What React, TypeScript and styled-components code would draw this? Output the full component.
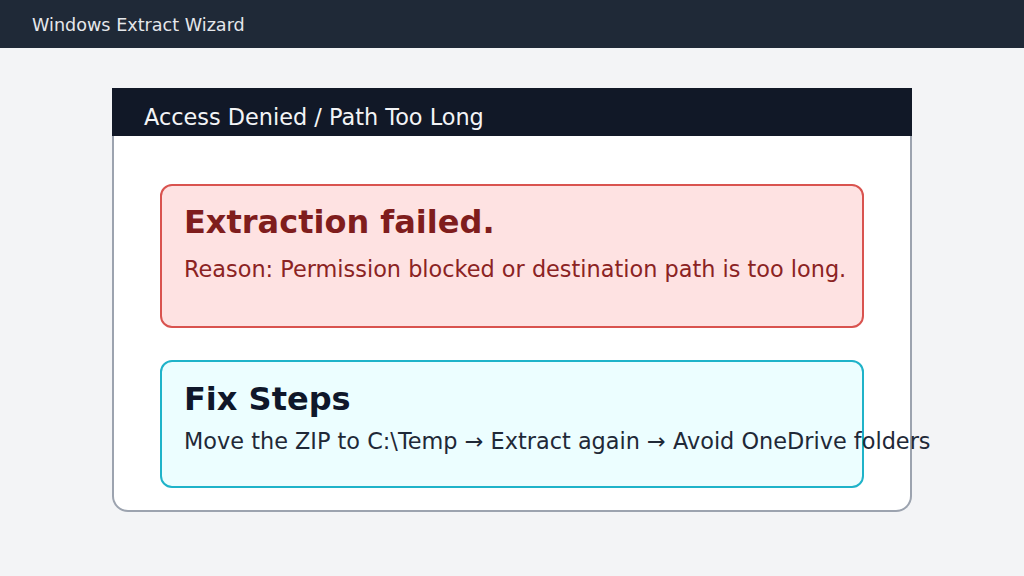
import React from "react";
import styled, { createGlobalStyle } from "styled-components";

const GlobalStyle = createGlobalStyle`
  html, body {
    margin: 0;
    padding: 0;
    background: #f3f4f6;
    font-family: "DejaVu Sans", "Liberation Sans", sans-serif;
  }
  * {
    box-sizing: border-box;
  }
`;

const App: React.FC = () => {
  return (
    <>
      <GlobalStyle />
      <Page>
        <TopBar>
          <TopTitle>Windows Extract Wizard</TopTitle>
        </TopBar>
        <Main>
          <Panel>
            <PanelHeader>Access Denied / Path Too Long</PanelHeader>
            <PanelBody>
              <Notice $tone="error">
                <NoticeTitle $tone="error">Extraction failed.</NoticeTitle>
                <NoticeText $tone="error">
                  Reason: Permission blocked or destination path is too long.
                </NoticeText>
              </Notice>
              <Notice $tone="info">
                <NoticeTitle $tone="info">Fix Steps</NoticeTitle>
                <NoticeText $tone="info">
                  Move the ZIP to C:\Temp → Extract again → Avoid OneDrive
                  folders
                </NoticeText>
              </Notice>
            </PanelBody>
          </Panel>
        </Main>
      </Page>
    </>
  );
};

type Tone = "error" | "info";

const tones = {
  error: {
    border: "#d9534f",
    bg: "#fee2e2",
    title: "#7f1d1d",
    text: "#8b2323",
    height: "144px",
    pad: "17px",
    gap: "15px",
  },
  info: {
    border: "#1fb3c9",
    bg: "#ecfeff",
    title: "#0f172a",
    text: "#1f2937",
    height: "128px",
    pad: "18px",
    gap: "10px",
  },
};

const Page = styled.div`
  width: 1024px;
  height: 576px;
  background: #f3f4f6;
  overflow: hidden;
`;

const TopBar = styled.header`
  height: 48px;
  background: #1f2937;
  display: flex;
  align-items: center;
  padding: 2px 32px 0;
`;

const TopTitle = styled.span`
  color: #e5e7eb;
  font-size: 17.6px;
`;

const Main = styled.main`
  display: flex;
  justify-content: center;
  padding-top: 40px;
`;

const Panel = styled.section`
  width: 800px;
  display: flex;
  flex-direction: column;
`;

const PanelHeader = styled.div`
  height: 48px;
  background: #111827;
  color: #f3f4f6;
  font-size: 22.4px;
  display: flex;
  align-items: flex-end;
  padding: 0 32px 6px;
`;

const PanelBody = styled.div`
  background: #ffffff;
  border: 2px solid #9ca3af;
  border-top: none;
  border-radius: 0 0 16px 16px;
  padding: 48px 46px 22px;
  display: flex;
  flex-direction: column;
  gap: 32px;
`;

const Notice = styled.div<{ $tone: Tone }>`
  height: ${({ $tone }) => tones[$tone].height};
  background: ${({ $tone }) => tones[$tone].bg};
  border: 2px solid ${({ $tone }) => tones[$tone].border};
  border-radius: 12px;
  padding: ${({ $tone }) => tones[$tone].pad} 22px 0;
  display: flex;
  flex-direction: column;
  gap: ${({ $tone }) => tones[$tone].gap};
`;

const NoticeTitle = styled.h2<{ $tone: Tone }>`
  margin: 0;
  font-size: 32px;
  font-weight: bold;
  color: ${({ $tone }) => tones[$tone].title};
`;

const NoticeText = styled.p<{ $tone: Tone }>`
  margin: 0;
  font-size: 22.4px;
  white-space: nowrap;
  color: ${({ $tone }) => tones[$tone].text};
`;

export default App;
